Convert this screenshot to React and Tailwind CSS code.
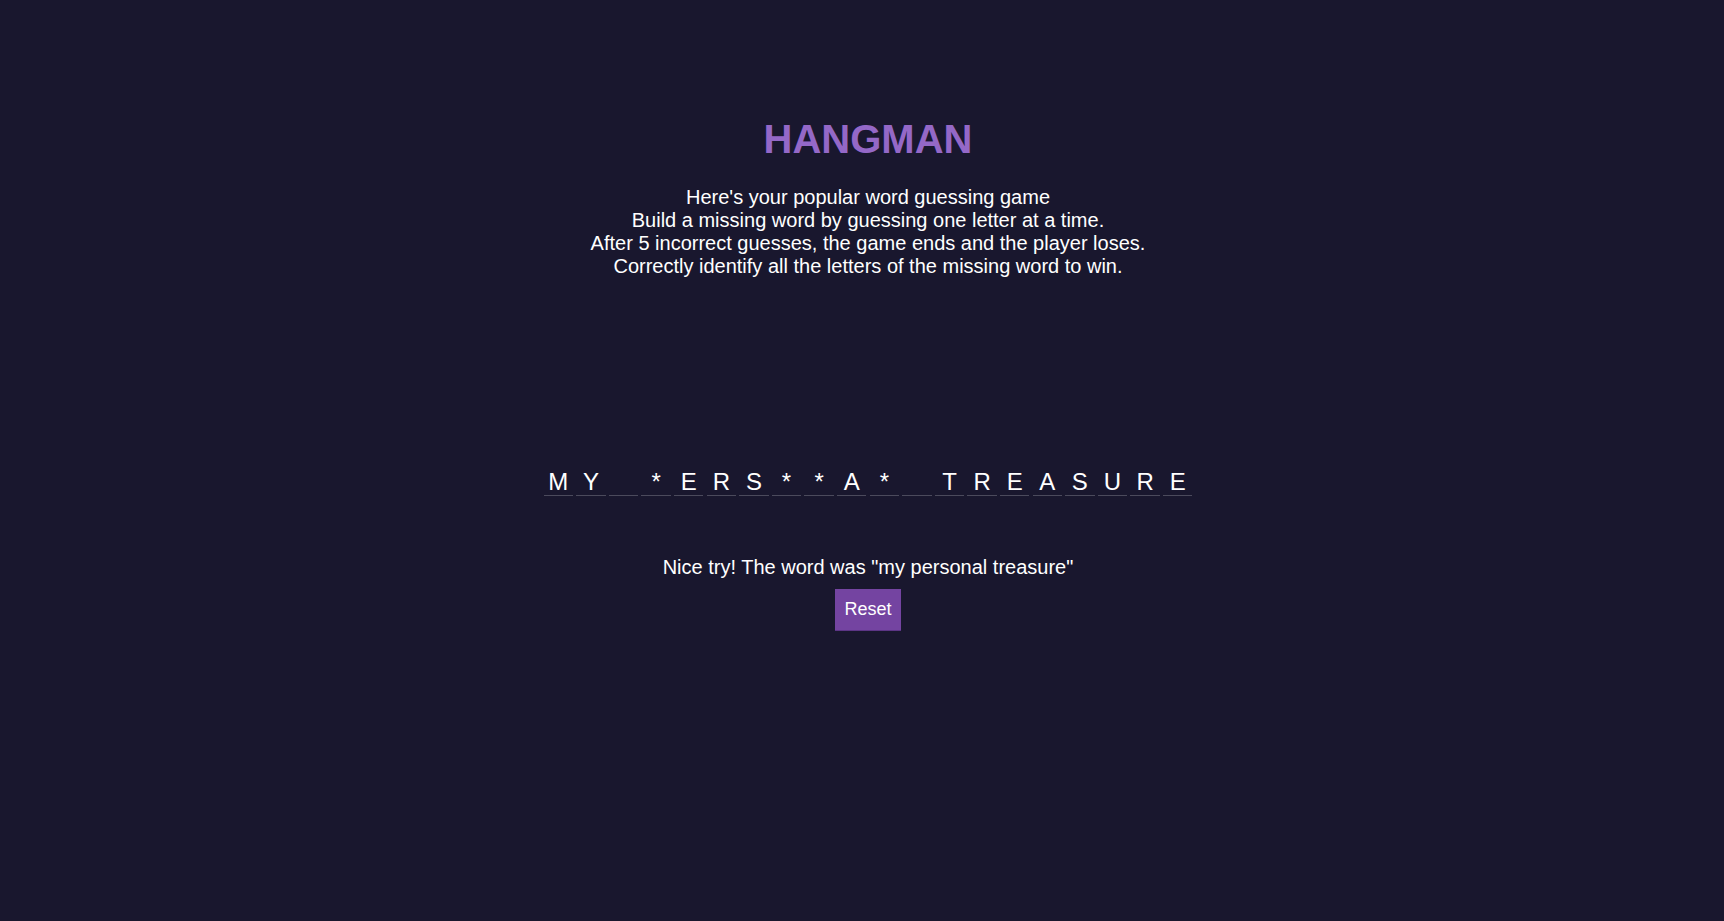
import { useState } from "react";

const WORD = "my personal treasure";
const SHOWN = ["m", "y", "e", "r", "s", "a", "t", "u"];

function App() {
  const [guessed, setGuessed] = useState(SHOWN);

  const handleReset = () => {
    setGuessed(SHOWN);
  };

  return (
    <div className="min-h-screen bg-[#19172e] text-white font-['Liberation_Sans',Arial,sans-serif] flex flex-col items-center pl-[12px] pt-[116px]">
      {/* Header */}
      <h1 className="text-[40px] leading-[46px] font-bold text-[#9468c7]">HANGMAN</h1>
      <p className="mt-[24px] text-[20px] leading-[23px] text-center">
        Here's your popular word guessing game
        <br />
        Build a missing word by guessing one letter at a time.
        <br />
        After 5 incorrect guesses, the game ends and the player loses.
        <br />
        Correctly identify all the letters of the missing word to win.
      </p>

      {/* Word */}
      <div className="mt-[190px] flex gap-[3.1px]">
        {WORD.split("").map((ch, i) => (
          <span
            key={i}
            className="w-[29.5px] flex justify-center border-b border-[#4b4a5c] text-[24px] leading-[27px]"
          >
            {ch === " " ? "\u00a0" : guessed.includes(ch) ? ch.toUpperCase() : "*"}
          </span>
        ))}
      </div>

      {/* Result */}
      <p className="mt-[60px] text-[20px] leading-[23px]">
        Nice try! The word was "{WORD}"
      </p>
      <button
        onClick={handleReset}
        className="mt-[10px] px-[9.5px] py-[10px] bg-[#7444a1] border-b border-[#5c3585] text-[18px] leading-[21px] text-white"
      >
        Reset
      </button>
    </div>
  );
}

export default App;
